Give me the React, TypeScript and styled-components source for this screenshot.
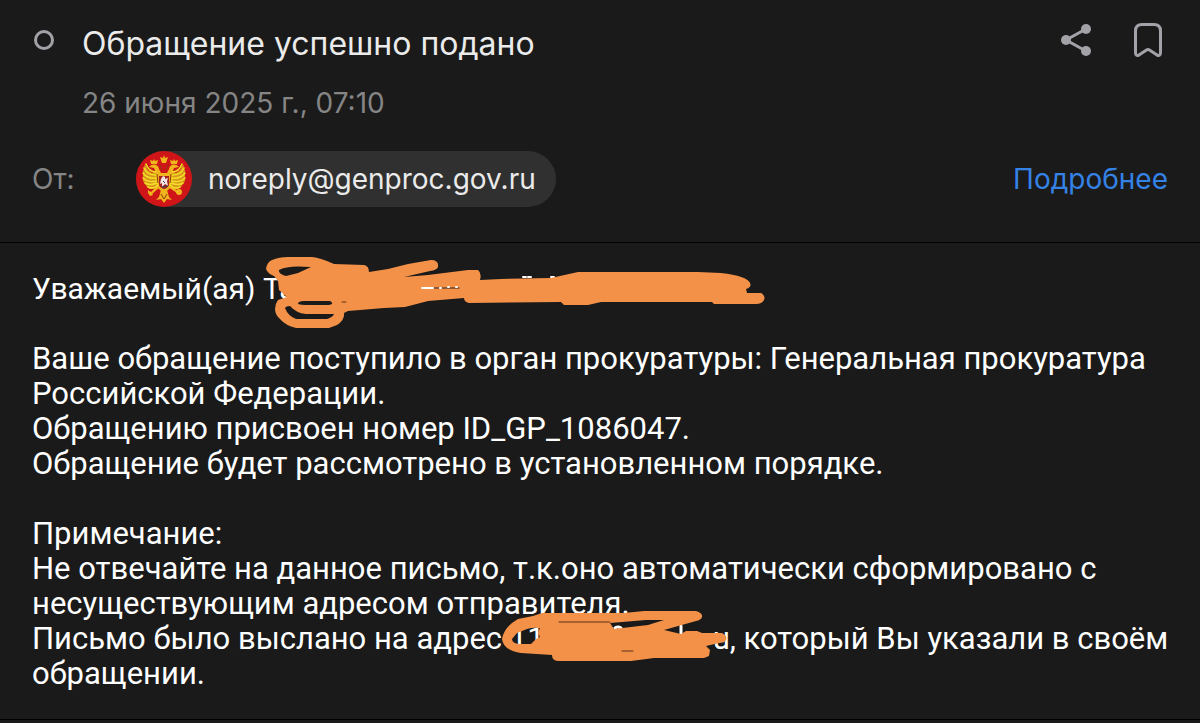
import React from "react";
import styled, { createGlobalStyle } from "styled-components";

const GlobalStyle = createGlobalStyle`
  body {
    margin: 0;
    background: #1a1a1a;
    font-family: Inter, "Noto Sans", sans-serif;
  }
`;

const Page = styled.main`
  color: #ffffff;
  background: #1a1a1a;
`;

const Header = styled.header`
  padding: 16px 32px 35px;
  border-bottom: 1px solid #000000;
`;

const TitleRow = styled.div`
  display: flex;
  align-items: flex-start;
`;

const StatusButton = styled.button`
  display: flex;
  width: 50px;
  padding: 14px 2px;
  border: 0;
  background: none;
`;

const TitleBlock = styled.div`
  flex: 1;
  min-width: 0;
`;

const Subject = styled.h1`
  margin: 0;
  font-size: 32px;
  line-height: 56px;
  font-weight: 400;
  color: #ebebeb;
`;

const SentAt = styled.time`
  display: block;
  font-size: 28px;
  line-height: 36px;
  margin-top: 13px;
  color: #858585;
`;

const Actions = styled.div`
  display: flex;
  gap: 36px;
  padding-right: 2px;
`;

const IconButton = styled.button`
  display: flex;
  width: 36px;
  height: 48px;
  padding: 0;
  align-items: center;
  justify-content: center;
  border: 0;
  background: none;
`;

const SenderRow = styled.div`
  display: flex;
  align-items: center;
  margin-top: 30px;
`;

const SenderLabel = styled.span`
  width: 104px;
  font-size: 28px;
  color: #858585;
`;

const SenderChip = styled.button`
  display: flex;
  align-items: center;
  gap: 16px;
  height: 56px;
  padding: 0 20px 0 0;
  border: 0;
  border-radius: 28px;
  background: #303030;
  color: #ebebeb;
  font-family: inherit;
  font-size: 28px;
`;

const DetailsLink = styled.a`
  margin-left: auto;
  font-size: 28px;
  color: #3582e6;
  text-decoration: none;
`;

const Message = styled.article`
  padding: 28px 24px 28px 32px;
  border-bottom: 1px solid #000000;
  font-family: Roboto, "Noto Sans", sans-serif;
  font-size: 31px;
  line-height: 35px;
`;

const Paragraph = styled.p`
  margin: 0 0 35px;

  &:last-child {
    margin-bottom: 0;
  }
`;

const Greeting = styled(Paragraph)`
  font-size: 30px;
`;

const Redacted = styled.span<{ $width: number }>`
  position: relative;
  display: inline-flex;
  justify-content: space-between;
  width: ${(p) => p.$width}px;
`;

const Scribble = styled.svg<{ $left: number; $top: number }>`
  position: absolute;
  left: ${(p) => p.$left}px;
  top: ${(p) => p.$top}px;
  fill: #f39149;
  fill-rule: evenodd;
  stroke-linecap: round;
`;

const ShareIcon = () => (
  <svg width="32" height="34" viewBox="1059 23 32 34" fill="#a3a2a9" aria-hidden="true">
    <path d="M1085 29 1065 40 1085 51" fill="none" stroke="#a3a2a9" strokeWidth="3" />
    <circle cx="1085" cy="29" r="5" />
    <circle cx="1065" cy="40" r="5" />
    <circle cx="1085" cy="51" r="5" />
  </svg>
);

const BookmarkIcon = () => (
  <svg width="30" height="36" viewBox="1133 22 30 36" fill="none" stroke="#a3a2a9" strokeWidth="3" strokeLinejoin="round" aria-hidden="true">
    <path d="M1135.500 31Q1135.500 24.500 1142 24.500H1154Q1160.500 24.500 1160.500 31V52.500Q1160.500 56.500 1157 55L1149.500 50Q1148 49 1146.500 50L1139 55Q1135.500 56.500 1135.500 52.500Z" />
  </svg>
);

const Emblem = () => (
  <svg width="56" height="56" viewBox="0 0 56 56" aria-hidden="true">
    <circle cx="28" cy="28" r="28" fill="#cf1517" />
    <g fill="#d9971c">
      <path d="M9 13L7 20 7 30 11 36 18 38 22 34 20 20 16 22 12 19zM47 13L49 20 49 30 45 36 38 38 34 34 36 20 40 22 44 19z" />
    </g>
    <g fill="#f0b51c">
      <path d="M25 9l-1-3 3 1 1-3 1 3 3-1-1 3-1 3h-4z" />
      <path d="M15 13l-1-4 3 1 1-2 1 2 3-1-1 4zM35 13l-1-4 3 1 1-2 1 2 3-1-1 4z" />
      <path d="M13 16c4-4 9-3 10 2l2 4h6l2-4c1-5 6-6 10-2l-5 1-2 5 1 6-2 8-4 4h-6l-4-4-2-8 1-6-2-5z" />
      <path d="M24 36l-8 7-2-1 8-8zM32 36l9 6 1-2-8-6z" />
      <path d="M25 39h6l2 7 3 3-5-1-3 4-3-4-5 1 3-3z" />
      <circle cx="43" cy="41" r="3" />
      <path d="M12 39l3 2 2 3-3 1-2-3z" />
    </g>
    <g fill="none" stroke="#f3df28" strokeWidth="1.500" strokeLinecap="round">
      <path d="M20 21Q13 21 10 13M20 24Q11 24 8 17M20 27Q11 28 7 22M20 30Q12 32 7 27M21 32Q14 35 9 32M22 34Q17 39 12 36" />
      <path d="M36 21Q43 21 46 13M36 24Q45 24 48 17M36 27Q45 28 49 22M36 30Q44 32 49 27M35 32Q42 35 47 32M34 34Q39 39 44 36" />
    </g>
    <path d="M24 14l2 5M32 14l-2 5M21 23l1 9M35 23l-1 9M25 43l3 5 3-5" stroke="#8f3913" fill="none" />
    <path d="M23 25h10v9q-1 3-5 4-4-1-5-4z" fill="#a42321" />
    <path d="M25 28l2-3 2 1v2l3-1-1 3 1 5-3-2-3 3v-4l-2 1z" fill="#f3e5e6" />
    <path d="M27 30l2 2M26 36l6-1" stroke="#33404a" />
  </svg>
);

const App: React.FC = () => (
  <Page>
    <GlobalStyle />
    <Header>
      <TitleRow>
        <StatusButton aria-label="Отметить как непрочитанное">
          <svg width="20" height="20" viewBox="0 0 20 20" aria-hidden="true">
            <circle cx="10" cy="10" r="8.500" fill="none" stroke="#a3a2a9" strokeWidth="3" />
          </svg>
        </StatusButton>
        <TitleBlock>
          <Subject>Обращение успешно подано</Subject>
          <SentAt dateTime="2025-06-26T07:10">26 июня 2025 г., 07:10</SentAt>
        </TitleBlock>
        <Actions>
          <IconButton aria-label="Поделиться"><ShareIcon /></IconButton>
          <IconButton aria-label="Добавить закладку"><BookmarkIcon /></IconButton>
        </Actions>
      </TitleRow>
      <SenderRow>
        <SenderLabel>От:</SenderLabel>
        <SenderChip>
          <Emblem />
          <span>noreply@genproc.gov.ru</span>
        </SenderChip>
        <DetailsLink href="#details">Подробнее</DetailsLink>
      </SenderRow>
    </Header>
    <Message>
      <Greeting>
        Уважаемый(ая){" "}
        <Redacted $width={500}>
          <span>Та</span>
          <Scribble $left={-2} $top={-18} width="510" height="80" viewBox="260 253 510 80" aria-hidden="true">
            <path d="M522 277h3M527 277h3M550 277h3" fill="none" stroke="#fff" strokeWidth="2" />
            <path d="M265 269Q266 262 271 260Q278 257 287 257H311Q320 258 333 264L363 265Q368 266 368 272L387 269 407 264 430 260Q438 260 437 267Q436 270 429 271L403 277 427 275 467 270 477 270Q481 273 479 280L500 279 550 278 577 272H697L720 273Q746 276 749 283Q751 287 745 289L746 293H760Q765 296 763 300Q761 304 755 304H713L711 302H600L587 305H563L560 302 468 303Q463 302 463 298L427 301 404 307 383 308 347 311 343 313Q344 320 336 325L328 328H295Q284 325 280 320Q274 315 274 309Q274 304 277 300L286 297 278 290 277 281 273 276Q267 274 265 269ZM278 270Q277 274 285 276L297 273 310 267Q286 265 278 270ZM297 304Q300 305 305 305H328Q334 304 329 301H303Q297 301 297 304ZM284 308Q287 316 295 319H326Q332 317 333 314H305Q295 313 289 306Q285 306 284 308Z" />
            <path d="M341 302h4" stroke="#5f3116" strokeWidth="1" />
            <path d="M421 288h37" stroke="#30231c" strokeWidth="1" />
            <path d="M421 288h11M439 288h1M447 287h1M455 287h1" stroke="#fff" strokeWidth="2" />
          </Scribble>
        </Redacted>
      </Greeting>
      <Paragraph>
        Ваше обращение поступило в орган прокуратуры: Генеральная прокуратура Российской Федерации.
        <br />
        Обращению присвоен номер ID_GP_1086047.
        <br />
        Обращение будет рассмотрено в установленном порядке.
      </Paragraph>
      <Paragraph>
        Примечание:
        <br />
        Не отвечайте на данное письмо, т.к.оно автоматически сформировано с несуществующим адресом отправителя.
        <br />
        Письмо было выслано на адрес{" "}
        <Redacted $width={220}>
          <span>11</span>
          <span>u</span>
          <Scribble $left={-11} $top={-15} width="232" height="60" viewBox="498 605 232 60" aria-hidden="true">
            <path d="M680 625v8M614 627q3-2 6 0" fill="none" stroke="#fff" strokeWidth="3" />
            <path d="M501 638Q503 626 517 618L532 615 541 612 623 612 643 610H695Q702 612 701 616Q700 619 695 620L663 629 680 633 685 630 696 630 701 632H721Q727 635 725 639Q724 642 718 642L705 645 709 649 708 655 703 657H653L630 660H558Q551 660 551 654L520 652Q502 649 501 638ZM511 638Q511 643 520 643L530 643 535 638 539 636 537 632 539 627Q532 626 526 628L516 632ZM609 622L613 628 647 624 663 619 645 619Z" />
            <path d="M558 621h51M621 650h11" stroke="#5f3116" strokeWidth="1" />
          </Scribble>
        </Redacted>
        , который Вы указали в своём обращении.
      </Paragraph>
    </Message>
  </Page>
);

export default App;
